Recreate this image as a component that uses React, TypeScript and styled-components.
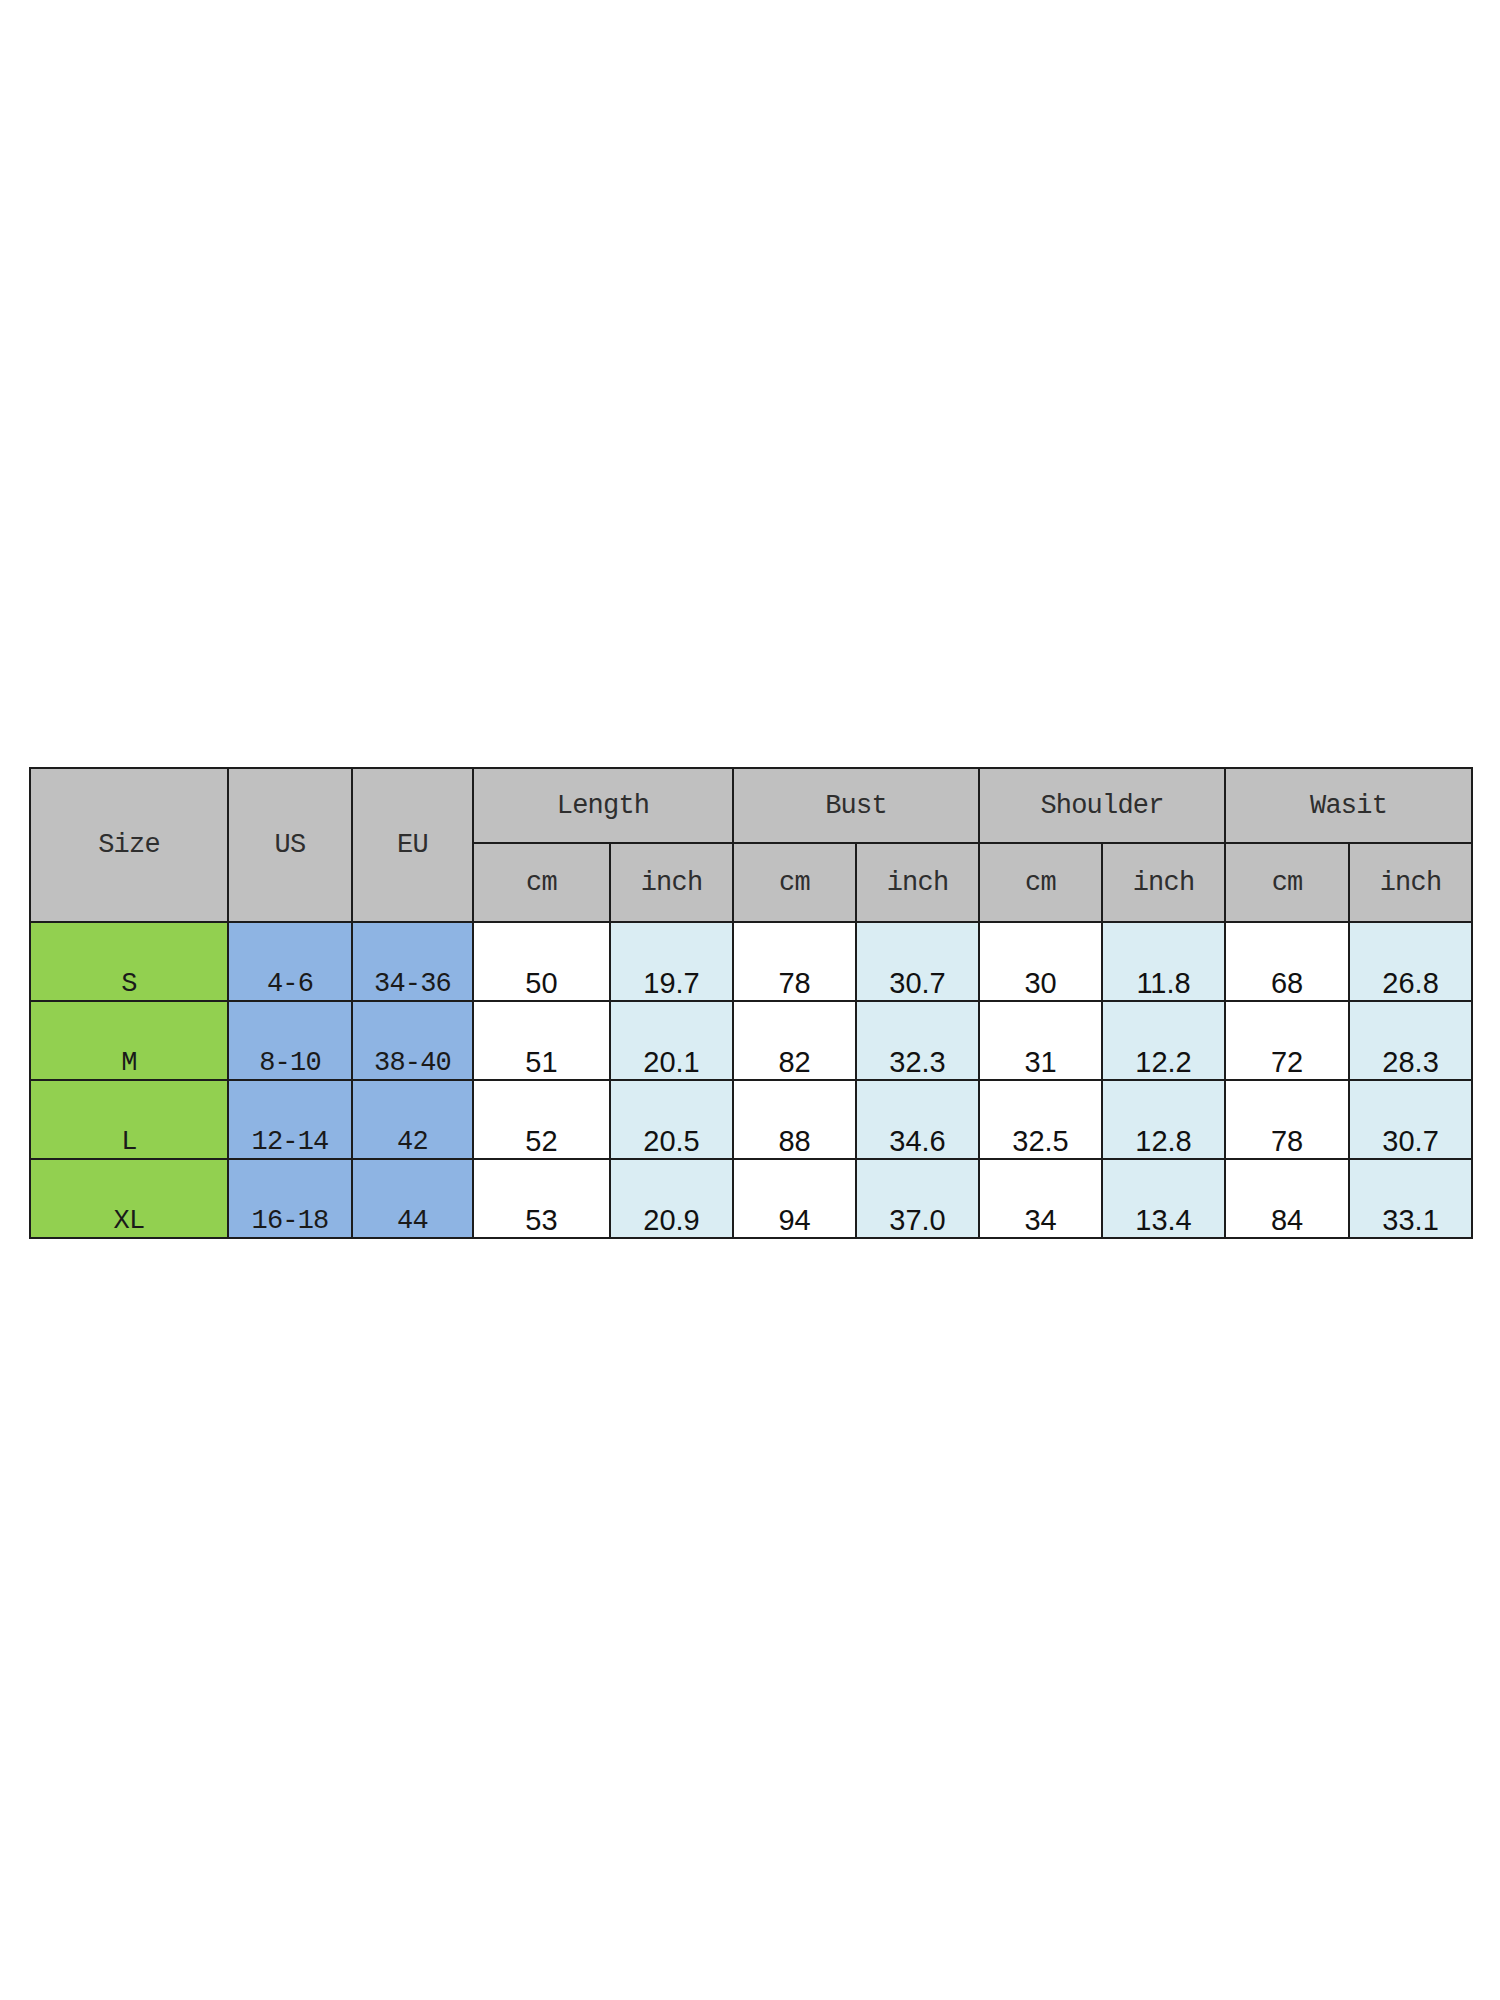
import React from 'react';
import styled, { createGlobalStyle } from 'styled-components';

const GlobalStyle = createGlobalStyle`
  html, body {
    margin: 0;
    padding: 0;
    background: #ffffff;
  }
`;

type Row = {
  size: string;
  us: string;
  eu: string;
  values: string[];
};

const groups = ['Length', 'Bust', 'Shoulder', 'Wasit'];

const rows: Row[] = [
  { size: 'S', us: '4-6', eu: '34-36', values: ['50', '19.7', '78', '30.7', '30', '11.8', '68', '26.8'] },
  { size: 'M', us: '8-10', eu: '38-40', values: ['51', '20.1', '82', '32.3', '31', '12.2', '72', '28.3'] },
  { size: 'L', us: '12-14', eu: '42', values: ['52', '20.5', '88', '34.6', '32.5', '12.8', '78', '30.7'] },
  { size: 'XL', us: '16-18', eu: '44', values: ['53', '20.9', '94', '37.0', '34', '13.4', '84', '33.1'] },
];

const colWidths = [198, 124, 121, 137, 123, 123, 123, 123, 123, 124, 123];

export default function App() {
  return (
    <>
      <GlobalStyle />
      <Page>
        <Chart>
          <colgroup>
            {colWidths.map((w, i) => (
              <col key={i} style={{ width: w }} />
            ))}
          </colgroup>
          <thead>
            <GroupRow>
              <HeadCell rowSpan={2}>Size</HeadCell>
              <HeadCell rowSpan={2}>US</HeadCell>
              <HeadCell rowSpan={2}>EU</HeadCell>
              {groups.map((g) => (
                <HeadCell key={g} colSpan={2}>
                  {g}
                </HeadCell>
              ))}
            </GroupRow>
            <UnitRow>
              {groups.map((g) => (
                <React.Fragment key={g}>
                  <HeadCell>cm</HeadCell>
                  <HeadCell>inch</HeadCell>
                </React.Fragment>
              ))}
            </UnitRow>
          </thead>
          <tbody>
            {rows.map((r) => (
              <DataRow key={r.size}>
                <LabelCell $bg="#92d050">{r.size}</LabelCell>
                <LabelCell $bg="#8eb4e3">{r.us}</LabelCell>
                <LabelCell $bg="#8eb4e3">{r.eu}</LabelCell>
                {r.values.map((v, i) => (
                  <ValueCell key={i} $tint={i % 2 === 1}>
                    {v}
                  </ValueCell>
                ))}
              </DataRow>
            ))}
          </tbody>
        </Chart>
      </Page>
    </>
  );
}

const Page = styled.div`
  min-height: 2000px;
  box-sizing: border-box;
  padding: 767px 0 0 29px;
  background: #ffffff;
`;

const Chart = styled.table`
  border-collapse: collapse;
  table-layout: fixed;
  width: 1442px;

  th,
  td {
    border: 2px solid #1c1c1c;
    padding: 0;
    text-align: center;
  }
`;

const GroupRow = styled.tr`
  height: 75px;
`;

const UnitRow = styled.tr`
  height: 79px;
`;

const DataRow = styled.tr`
  height: 79px;
`;

const HeadCell = styled.th`
  background: #c0c0c0;
  color: #2e2e2e;
  font-family: 'Liberation Mono', 'DejaVu Sans Mono', monospace;
  font-size: 27px;
  letter-spacing: -0.8px;
  font-weight: normal;
  vertical-align: middle;
`;

const LabelCell = styled.td<{ $bg: string }>`
  background: ${(p) => p.$bg};
  color: #1a1a1a;
  font-family: 'Liberation Mono', 'DejaVu Sans Mono', monospace;
  font-size: 27px;
  letter-spacing: -0.8px;
  line-height: 1;
  vertical-align: bottom;
  padding-bottom: 2px !important;
`;

const ValueCell = styled.td<{ $tint: boolean }>`
  background: ${(p) => (p.$tint ? '#daedf3' : '#ffffff')};
  color: #111111;
  font-family: 'Liberation Sans', Arial, sans-serif;
  font-size: 29px;
  line-height: 1;
  vertical-align: bottom;
  padding-bottom: 2px !important;
`;
